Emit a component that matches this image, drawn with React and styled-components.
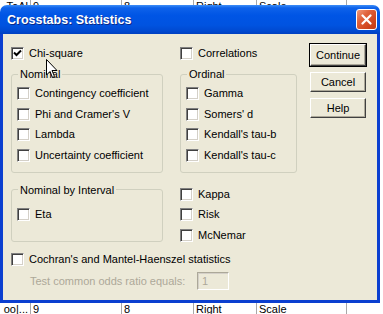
import styled, { createGlobalStyle } from "styled-components";

const GlobalStyle = createGlobalStyle`
  body {
    margin: 0;
    background: #fff;
    font-family: "Liberation Sans", Arial, sans-serif;
    font-size: 11px;
  }
`

const Screen = styled.div`
  position: relative;
  width: 383px;
  height: 314px;
  overflow: hidden;
  background: #fff;
  display: grid;
  grid-template-rows: 5px 298px 11px;
`

const SheetRow = styled.div`
  display: grid;
  grid-template-columns: 30px 91px 72px 63px 90px 1fr;
  overflow: hidden;
  align-items: ${p => (p.$top ? "end" : "start")};
`

const Cell = styled.div`
  height: 100%;
  border-left: ${p => (p.$first ? "none" : "1px solid #a8a8a8")};
  padding: 0 2px;
  line-height: 13px;
  color: #000;
  white-space: nowrap;
  text-align: ${p => (p.$right ? "right" : "left")};
  margin-top: ${p => (p.$top ? "-8px" : "0")};
`

const Dialog = styled.div`
  width: 380px;
  display: flex;
  flex-direction: column;
`

const TitleBar = styled.div`
  height: 29px;
  flex-shrink: 0;
  border-radius: 7px 7px 0 0;
  background: linear-gradient(to bottom, #3d8ef8 0%, #0e62ea 10%, #0055e5 35%, #0053e0 70%, #0049d0 90%, #0040c0 100%);
  display: flex;
  align-items: center;
  justify-content: space-between;
  padding: 0 3px 0 7px;
`

const Title = styled.span`
  color: #fff;
  font-weight: bold;
  font-size: 12.5px;
  text-shadow: 1px 1px #0a2a8a;
`

const CloseButton = styled.div`
  width: 21px;
  height: 21px;
  box-sizing: border-box;
  border: 1px solid #fff;
  border-radius: 3px;
  background: linear-gradient(135deg, #f19a7c 0%, #e0623c 35%, #d1471f 70%, #c23b17 100%);
  display: flex;
  align-items: center;
  justify-content: center;
`

const Body = styled.div`
  flex: 1;
  background: #ece9d8;
  border: 3px solid #0b3fd0;
  border-top: none;
  display: flex;
  padding: 9px 9px 0 8px;
  gap: 12px;
`

const Main = styled.div`
  width: 286px;
  margin-top: 4px;
  display: grid;
  grid-template-columns: 152px 117px;
  column-gap: 17px;
  align-content: start;
`

const Item = styled.label`
  display: flex;
  align-items: center;
  gap: 5px;
  height: 13px;
  line-height: 13px;
  color: #000;
  white-space: nowrap;
`

const Box = styled.span`
  width: 13px;
  height: 13px;
  box-sizing: border-box;
  flex-shrink: 0;
  background: #fff;
  border: 1px solid;
  border-color: #808080 #fff #fff #808080;
  box-shadow: inset 1px 1px #404040, inset -1px -1px #d4d0c8;
  display: flex;
  align-items: center;
  justify-content: center;
`

const Group = styled.fieldset`
  margin: ${p => p.$mt || 0}px 0 0;
  padding: ${p => p.$pt}px 5px ${p => p.$pb}px;
  border: 1px solid #d0d0bf;
  border-radius: 3px;
  min-width: 0;
  display: flex;
  flex-direction: column;
  gap: 7.67px;
`

const Legend = styled.legend`
  padding: 0 2px;
  margin-left: 1px;
  line-height: 12px;
  color: #000;
`

const Stack = styled.div`
  margin-top: ${p => p.$mt}px;
  display: flex;
  flex-direction: column;
  gap: 7.5px;
`

const Wide = styled.div`
  grid-column: 1 / span 2;
  margin-top: ${p => p.$mt}px;
  display: flex;
  align-items: center;
`

const Disabled = styled.span`
  width: 186px;
  padding-left: 19px;
  box-sizing: border-box;
  color: #aca899;
  white-space: nowrap;
`

const Field = styled.div`
  width: 32px;
  height: 18px;
  box-sizing: border-box;
  border: 1px solid;
  border-color: #aca899 #fff #fff #aca899;
  box-shadow: inset 1px 1px #d4d0c8;
  color: #aca899;
  padding: 2px 0 0 4px;
  line-height: 13px;
`

const Buttons = styled.div`
  display: flex;
  flex-direction: column;
  gap: 4px;
`

const Button = styled.div`
  width: 58px;
  height: ${p => (p.$default ? 24 : 22)}px;
  box-sizing: border-box;
  border: 1px solid ${p => (p.$default ? "#000" : "transparent")};
  display: flex;
`

const ButtonFace = styled.div`
  flex: 1;
  border: 1px solid;
  border-color: #fff #404040 #404040 #fff;
  box-shadow: inset -1px -1px #aca899;
  background: #ece9d8;
  display: flex;
  align-items: center;
  justify-content: center;
  color: #000;
  line-height: 13px;
`

const Cursor = styled.svg`
  position: absolute;
  left: 46px;
  top: 59px;
`

const Check = ({ checked }) => (
  <Box>
    {checked && (
      <svg width="9" height="9" viewBox="0 0 9 9">
        <path d="M1 3.5 L3.5 6 L8 1.5" stroke="#000" strokeWidth="2" fill="none" />
      </svg>
    )}
  </Box>
)

const Option = ({ label, checked }) => (
  <Item>
    <Check checked={checked} />
    {label}
  </Item>
)

export default function App() {
  return (
    <>
      <GlobalStyle />
      <Screen>
        <SheetRow $top>
          <Cell $first $right $top>ToAl</Cell>
          <Cell $top>9</Cell>
          <Cell $top>8</Cell>
          <Cell $top>Right</Cell>
          <Cell $top>Scale</Cell>
          <Cell $top />
        </SheetRow>

        <Dialog>
          <TitleBar>
            <Title>Crosstabs: Statistics</Title>
            <CloseButton>
              <svg width="11" height="11" viewBox="0 0 11 11">
                <path d="M1.5 1.5 L9.5 9.5 M9.5 1.5 L1.5 9.5" stroke="#fff" strokeWidth="2.2" strokeLinecap="round" />
              </svg>
            </CloseButton>
          </TitleBar>

          <Body>
            <Main>
              <Option label="Chi-square" checked />
              <Option label="Correlations" />

              <Group $mt={8} $pt={7} $pb={10}>
                <Legend>Nominal</Legend>
                <Option label="Contingency coefficient" />
                <Option label="Phi and Cramer's V" />
                <Option label="Lambda" />
                <Option label="Uncertainty coefficient" />
              </Group>
              <Group $mt={8} $pt={7} $pb={10}>
                <Legend>Ordinal</Legend>
                <Option label="Gamma" />
                <Option label="Somers' d" />
                <Option label="Kendall's tau-b" />
                <Option label="Kendall's tau-c" />
              </Group>

              <Group $mt={11} $pt={12} $pb={17}>
                <Legend>Nominal by Interval</Legend>
                <Option label="Eta" />
              </Group>
              <Stack $mt={15}>
                <Option label="Kappa" />
                <Option label="Risk" />
                <Option label="McNemar" />
              </Stack>

              <Wide $mt={11}>
                <Option label="Cochran's and Mantel-Haenszel statistics" />
              </Wide>
              <Wide $mt={6}>
                <Disabled>Test common odds ratio equals:</Disabled>
                <Field>1</Field>
              </Wide>
            </Main>

            <Buttons>
              <Button $default><ButtonFace>Continue</ButtonFace></Button>
              <Button><ButtonFace>Cancel</ButtonFace></Button>
              <Button><ButtonFace>Help</ButtonFace></Button>
            </Buttons>
          </Body>
        </Dialog>

        <SheetRow>
          <Cell $first $right>oo|...</Cell>
          <Cell>9</Cell>
          <Cell>8</Cell>
          <Cell>Right</Cell>
          <Cell>Scale</Cell>
          <Cell />
        </SheetRow>

        <Cursor width="12" height="20" viewBox="0 0 12 20">
          <path d="M0.5 0.5 L0.5 16 L4 12.5 L6.5 18.5 L8.5 17.5 L6 11.5 L11 11.5 Z" fill="#fff" stroke="#000" strokeWidth="1" />
        </Cursor>
      </Screen>
    </>
  );
}
